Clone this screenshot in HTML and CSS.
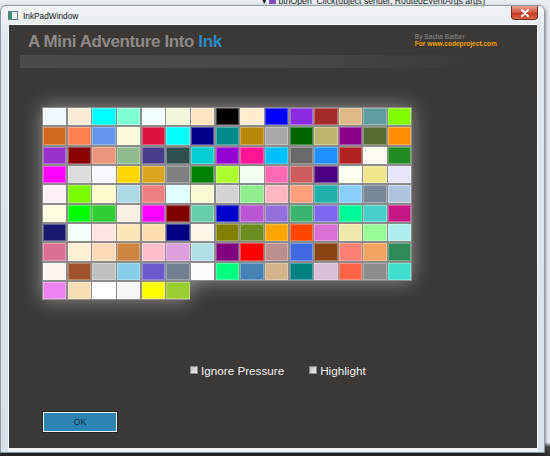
FILE: index.html
```html
<!DOCTYPE html>
<html lang="en">
<head>
    <meta charset="UTF-8">
    <title>InkPadWindow</title>
    <link rel="stylesheet" href="styles.css">
</head>
<body>
    <div class="behind">
        <span class="vs-line">&#9662; <span class="vs-icon"></span>btnOpen_Click(object sender, RoutedEventArgs args)</span>
    </div>

    <div class="window">
        <div class="titlebar">
            <span class="app-icon"></span>
            <span class="title">InkPadWindow</span>
            <span class="close">
                <svg width="10" height="8" viewBox="0 0 10 8">
                    <path d="M2 1 L8 7 M8 1 L2 7" stroke="#fff" stroke-width="1.8" stroke-linecap="round"/>
                </svg>
            </span>
        </div>

        <div class="client">
            <div class="header">
                <div class="heading">A Mini Adventure Into <span class="ink">Ink</span></div>
                <div class="byline">
                    <div>By Sacha Barber</div>
                    <div class="site">For www.codeproject.com</div>
                </div>
            </div>
            <div class="header-bar"></div>

            <div class="palette" id="palette"></div>

            <div class="options">
                <label class="option"><span class="check"></span>Ignore Pressure</label>
                <label class="option"><span class="check"></span>Highlight</label>
            </div>

            <button class="ok">OK</button>
        </div>
    </div>

    <script>
        // all the named colours, in the order the window lists them
        const colours = ("AliceBlue AntiqueWhite Aqua Aquamarine Azure Beige Bisque Black BlanchedAlmond Blue BlueViolet Brown BurlyWood CadetBlue Chartreuse " +
            "Chocolate Coral CornflowerBlue Cornsilk Crimson Cyan DarkBlue DarkCyan DarkGoldenrod DarkGray DarkGreen DarkKhaki DarkMagenta DarkOliveGreen DarkOrange " +
            "DarkOrchid DarkRed DarkSalmon DarkSeaGreen DarkSlateBlue DarkSlateGray DarkTurquoise DarkViolet DeepPink DeepSkyBlue DimGray DodgerBlue Firebrick FloralWhite ForestGreen " +
            "Fuchsia Gainsboro GhostWhite Gold Goldenrod Gray Green GreenYellow Honeydew HotPink IndianRed Indigo Ivory Khaki Lavender " +
            "LavenderBlush LawnGreen LemonChiffon LightBlue LightCoral LightCyan LightGoldenrodYellow LightGray LightGreen LightPink LightSalmon LightSeaGreen LightSkyBlue LightSlateGray LightSteelBlue " +
            "LightYellow Lime LimeGreen Linen Magenta Maroon MediumAquamarine MediumBlue MediumOrchid MediumPurple MediumSeaGreen MediumSlateBlue MediumSpringGreen MediumTurquoise MediumVioletRed " +
            "MidnightBlue MintCream MistyRose Moccasin NavajoWhite Navy OldLace Olive OliveDrab Orange OrangeRed Orchid PaleGoldenrod PaleGreen PaleTurquoise " +
            "PaleVioletRed PapayaWhip PeachPuff Peru Pink Plum PowderBlue Purple Red RosyBrown RoyalBlue SaddleBrown Salmon SandyBrown SeaGreen " +
            "SeaShell Sienna Silver SkyBlue SlateBlue SlateGray Snow SpringGreen SteelBlue Tan Teal Thistle Tomato Transparent Turquoise " +
            "Violet Wheat White WhiteSmoke Yellow YellowGreen").split(" ");

        const palette = document.getElementById("palette");
        colours.forEach(name => {
            const swatch = document.createElement("div");
            swatch.className = "swatch";
            swatch.title = name;
            const fill = document.createElement("div");
            fill.className = "fill";
            fill.style.background = name;
            swatch.appendChild(fill);
            palette.appendChild(swatch);
        });
    </script>
</body>
</html>
```

FILE: styles.css
```css
body {
    margin: 0;
    padding: 0;
    width: 550px;
    height: 456px;
    overflow: hidden;
    background: linear-gradient(to bottom, #e9eef2 0%, #e9eef2 97%, #4a4a4a 98%, #333 100%);
    font-family: 'Liberation Sans', Arial, sans-serif;
}

.behind {
    height: 5px;
    overflow: hidden;
    padding-left: 262px;
}

.vs-line {
    display: block;
    margin-top: -3px;
    font-size: 8.7px;
    line-height: 9px;
    color: #222;
}

.vs-icon {
    display: inline-block;
    width: 7px;
    height: 7px;
    margin-right: 2px;
    background: #7a4fc0;
}

.window {
    width: 543px;
    background: linear-gradient(to bottom, #f3f6f8, #dfe7ed 30px, #d7e1e9);
    border: 1px solid #8f9ca8;
    border-radius: 6px 6px 0 0;
    box-shadow: 0 2px 4px rgba(0, 0, 0, 0.6);
}

.titlebar {
    height: 18px;
    display: flex;
    align-items: center;
    padding-left: 7px;
    position: relative;
}

.app-icon {
    width: 8px;
    height: 7px;
    border: 1px solid #6a7a88;
    background: linear-gradient(to right, #3d8f6e 0 3px, #e8f0f4 3px);
    margin-top: 1px;
}

.title {
    margin-left: 5px;
    margin-top: 1px;
    font-size: 8.3px;
    color: #111;
}

.close {
    position: absolute;
    right: 6px;
    top: 0;
    width: 25px;
    height: 13px;
    display: flex;
    align-items: center;
    justify-content: center;
    border: 1px solid #7a2a20;
    border-top: none;
    border-radius: 0 0 4px 4px;
    background: linear-gradient(to bottom, #e9a493, #d2543e 50%, #c0331c 51%, #d86a48);
}

.client {
    margin: 0 6px 0 7px;
    height: 423px;
    background-color: #3c3836;
    border: 1px solid #f4f8fa;
    border-bottom-width: 4px;
    border-bottom-color: #eaf4f6;
}

.header {
    display: flex;
    align-items: flex-start;
    padding: 7px 40px 0 19px;
}

.heading {
    font-size: 17px;
    line-height: 20px;
    font-weight: bold;
    letter-spacing: -0.4px;
    color: #8c8a88;
}

.ink {
    color: #2d8cc4;
}

.byline {
    margin-left: auto;
    margin-top: 1px;
    font-size: 6.6px;
    line-height: 7.4px;
    color: #8e8c8a;
}

.site {
    font-weight: bold;
    color: #f2a100;
}

.header-bar {
    margin: 3px 0 0 11px;
    width: 470px;
    height: 13px;
    background: linear-gradient(to right, #4d4a48 0%, #4a4745 55%, rgba(60, 56, 54, 0) 100%);
}

.palette {
    display: grid;
    grid-template-columns: repeat(15, 24.67px);
    grid-auto-rows: 19.33px;
    width: max-content;
    margin: 39px 0 0 33.3px;
    filter: drop-shadow(0 0 10px rgba(255, 255, 255, 0.45));
}

.swatch {
    padding: 1px 0.67px;
    background-color: #8c8c8c;
}

.fill {
    height: 100%;
    box-sizing: border-box;
    border: 1px solid rgba(255, 255, 255, 0.3);
}

.options {
    display: flex;
    gap: 25px;
    margin: 63px 0 0 181px;
    height: 14px;
    align-items: center;
}

.option {
    display: flex;
    align-items: center;
    gap: 3px;
    font-size: 11.7px;
    color: #f2f2f2;
}

.check {
    width: 6px;
    height: 6px;
    border: 1px solid #8a8a8a;
    background: linear-gradient(to bottom right, #bdbdbd, #f0f0f0);
}

.ok {
    display: block;
    margin: 35px 0 0 34px;
    width: 74px;
    height: 20px;
    padding: 0;
    border: 1px solid #eef4f7;
    outline: 1px solid #222;
    background-color: #2b84b2;
    color: #11303f;
    font-family: 'Liberation Sans', Arial, sans-serif;
    font-size: 8.5px;
}
```
